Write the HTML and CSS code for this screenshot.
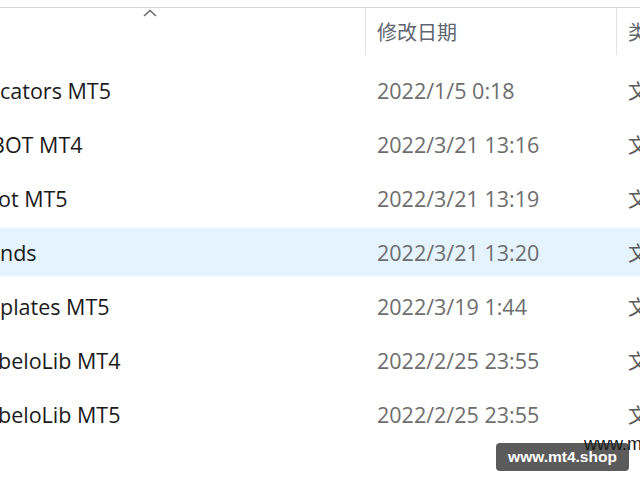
FILE: index.html
```html
<!DOCTYPE html>
<html lang="zh">
<head>
<meta charset="utf-8">
<title>Explorer</title>
<link rel="stylesheet" href="styles.css">
</head>
<body>
<div class="pane">
  <div class="header">
    <div class="col-name hcell">
      <svg class="caret" width="14" height="8" viewBox="0 0 14 8"><path d="M1 7 L7 1.5 L13 7" fill="none" stroke="#6a6a6a" stroke-width="1.6"/></svg>
    </div>
    <div class="col-date hcell divider">修改日期</div>
    <div class="col-type hcell divider">类型</div>
  </div>
  <div class="row"><div class="col-name name"><span>cators MT5</span></div><div class="col-date date">2022/1/5 0:18</div><div class="col-type type">文件夹</div></div>
  <div class="row"><div class="col-name name"><span class="cut-b">BOT MT4</span></div><div class="col-date date">2022/3/21 13:16</div><div class="col-type type">文件夹</div></div>
  <div class="row"><div class="col-name name"><span class="cut-s">ot MT5</span></div><div class="col-date date">2022/3/21 13:19</div><div class="col-type type">文件夹</div></div>
  <div class="row hover"><div class="col-name name"><span>nds</span></div><div class="col-date date">2022/3/21 13:20</div><div class="col-type type">文件夹</div></div>
  <div class="row"><div class="col-name name"><span>plates MT5</span></div><div class="col-date date">2022/3/19 1:44</div><div class="col-type type">文件夹</div></div>
  <div class="row"><div class="col-name name"><span class="cut-s">beloLib MT4</span></div><div class="col-date date">2022/2/25 23:55</div><div class="col-type type">文件夹</div></div>
  <div class="row"><div class="col-name name"><span class="cut-s">beloLib MT5</span></div><div class="col-date date">2022/2/25 23:55</div><div class="col-type type">文件夹</div></div>
</div>
<div class="watermark">www.mt4.shop</div>
<div class="wm-back">www.mt4.shop</div>
</body>
</html>
```
FILE: styles.css
```css
html, body {
  margin: 0;
  padding: 0;
  background: #ffffff;
  width: 640px;
  height: 480px;
  overflow: hidden;
}
body {
  position: relative;
  font-family: "Open Sans", "Noto Sans CJK SC", sans-serif;
}
.pane {
  margin-top: 7px;
  border-top: 1px solid #d6d6d6;
}
.header {
  display: flex;
  height: 47px;
  margin-bottom: 11px;
}
.hcell {
  display: flex;
  align-items: center;
  font-family: "Noto Sans CJK SC", sans-serif;
  font-size: 20px;
  color: #5f6670;
  box-sizing: border-box;
}
.col-name { width: 365px; flex: none; box-sizing: border-box; }
.col-date { width: 251px; flex: none; box-sizing: border-box; padding-left: 11px; }
.col-type { flex: 1; box-sizing: border-box; padding-left: 11px; white-space: nowrap; overflow: hidden; }
.divider { border-left: 1px solid #e3e3e3; }
.header .col-name { align-items: flex-start; }
.caret { margin-left: 143px; margin-top: 1px; }
.row {
  display: flex;
  align-items: center;
  height: 48px;
  margin-bottom: 6px;
  font-size: 21.5px;
}
.row.hover { background: #e5f3ff; }
.row .col-date, .row .col-type { padding-left: 12px; }
.name {
  color: #1b1b1b;
  overflow: hidden;
  white-space: nowrap;
}
.cut-b { display: inline-block; margin-left: -9px; }
.cut-s { display: inline-block; margin-left: -2px; }
.date { color: #6d6d6d; white-space: nowrap; }
.type {
  color: #5a5a5a;
  font-family: "Noto Sans CJK SC", sans-serif;
  font-size: 20px;
}
.watermark {
  position: absolute;
  left: 496px;
  top: 443px;
  width: 133px;
  height: 28px;
  box-sizing: border-box;
  background: #5b5b5b;
  border-radius: 4px;
  color: #ffffff;
  font-family: "Liberation Sans", sans-serif;
  font-weight: bold;
  font-size: 15.5px;
  display: flex;
  align-items: center;
  justify-content: center;
}
.wm-back {
  position: absolute;
  left: 584px;
  top: 434px;
  font-family: "Liberation Sans", sans-serif;
  font-size: 18px;
  color: #1a1a1a;
  white-space: nowrap;
}
```
